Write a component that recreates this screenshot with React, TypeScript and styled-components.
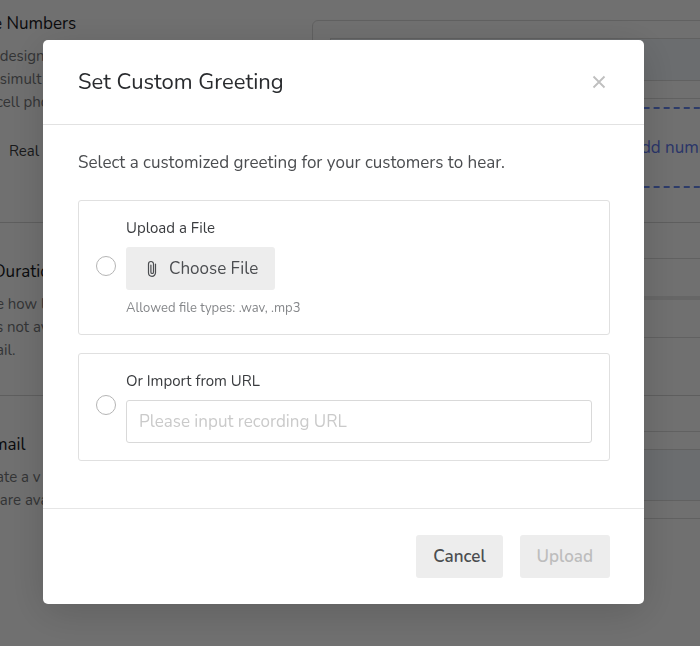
import React, { useState } from "react";
import styled, { createGlobalStyle } from "styled-components";

const GlobalStyle = createGlobalStyle`
  *, *::before, *::after { box-sizing: border-box; }
  body {
    margin: 0;
    background: #fff;
    color: #3a3c3f;
    font-family: Nunito, "Open Sans", "Noto Sans", sans-serif;
    overflow: hidden;
  }
  button, input { font-family: inherit; }
  h1, h2, p { margin: 0; font-weight: 400; }
`;

const Page = styled.main`
  min-height: 100vh;
  overflow: hidden;
`;

const Section = styled.section<{ $last?: boolean }>`
  display: grid;
  grid-template-columns: 312px 1fr;
  min-height: 173px;
  padding-top: 36px;
  border-bottom: ${(p) => (p.$last ? "none" : "1px solid #d6d6d6")};
  &:first-child {
    min-height: 223px;
    padding-top: 11px;
  }
`;

const Info = styled.div`
  margin-left: -7px;
  white-space: nowrap;
`;

const SectionTitle = styled.h2`
  font-size: 17px;
  line-height: 26px;
  color: #17191d;
  margin-bottom: 8px;
`;

const Description = styled.p`
  padding-left: 3px;
  font-size: 15px;
  line-height: 23px;
  color: #75777a;
`;

const SubLabel = styled.p`
  padding: 25px 0 0 16px;
  font-size: 15px;
  line-height: 24px;
`;

const Settings = styled.div`
  display: flex;
  flex-direction: column;
  gap: 8px;
  margin: -36px -40px 0 0;
  padding-top: 35px;
  ${Section}:first-child & {
    margin-top: 0;
    padding-top: 9px;
  }
`;

const Panel = styled.div`
  padding: 17px;
  border: 1px solid #dcdcdc;
  border-radius: 6px;
`;

const Strip = styled.div<{ $tall?: boolean }>`
  height: ${(p) => (p.$tall ? 52 : 43)}px;
  border: 1px solid #dcdcdc;
  background: #f3f7fc;
`;

const Track = styled.div`
  height: 80px;
  border: 1px solid #dcdcdc;
  &::before {
    content: "";
    display: block;
    height: 4px;
    margin-top: 37px;
    background: #e9e9e9;
  }
`;

const AddNumber = styled.button`
  height: 81px;
  border: 2px dashed #6688f0;
  background: none;
  color: #6078ee;
  font-size: 17px;
  padding: 0 0 0 300px;
  text-align: left;
`;

const Overlay = styled.div`
  position: fixed;
  inset: 0;
  display: flex;
  align-items: flex-start;
  padding: 40px 56px 42px 43px;
  background: rgba(0, 0, 0, 0.56);
`;

const Dialog = styled.form`
  flex: 1;
  min-width: 0;
  background: #fff;
  border-radius: 5px;
  box-shadow: 0 8px 40px rgba(0, 0, 0, 0.16);
`;

const Header = styled.header`
  display: flex;
  align-items: center;
  justify-content: space-between;
  padding: 26px 34px 26px 35px;
  border-bottom: 1px solid #e2e2e2;
`;

const Title = styled.h1`
  font-size: 22px;
  line-height: 32px;
  color: #292b2e;
`;

const CloseButton = styled.button`
  display: flex;
  padding: 4px;
  border: 0;
  background: none;
  color: #bfbfbf;
`;

const Body = styled.div`
  display: flex;
  flex-direction: column;
  gap: 18px;
  padding: 26px 34px 47px 35px;
`;

const Lead = styled.p`
  font-size: 17px;
  line-height: 24px;
  margin-bottom: 7px;
  color: #4b4d50;
`;

const Option = styled.div`
  display: grid;
  grid-template-columns: 20px 1fr;
  align-items: center;
  gap: 10px;
  padding: 17px;
  border: 1px solid #e0e0e0;
  border-radius: 3px;
`;

const Radio = styled.input`
  appearance: none;
  width: 20px;
  height: 20px;
  margin: 0 0 4px;
  border: 1px solid #b5b5b5;
  border-radius: 50%;
  background: #fff;
  &:checked {
    border: 6px solid #3c56c8;
  }
`;

const Fields = styled.div`
  display: flex;
  flex-direction: column;
  align-items: flex-start;
`;

const Label = styled.label`
  font-size: 15px;
  line-height: 21px;
  margin-bottom: 8px;
`;

const Button = styled.button<{ $strong?: boolean }>`
  display: flex;
  align-items: center;
  gap: 8px;
  height: 43px;
  padding: 0 17px;
  border: 0;
  border-radius: 3px;
  background: #ededed;
  color: #4b4d50;
  font-size: 17px;
  font-weight: ${(p) => (p.$strong ? 600 : 400)};
  &:disabled {
    color: #bdbdbd;
  }
`;

const Hint = styled.p`
  margin-top: 9px;
  font-size: 13px;
  line-height: 18px;
  color: #85878a;
`;

const UrlInput = styled.input`
  width: 100%;
  height: 43px;
  padding: 0 12px;
  border: 1px solid #d9d9d9;
  border-radius: 3px;
  font-size: 17px;
  color: #3a3c3f;
  &::placeholder {
    color: #cacaca;
    opacity: 1;
  }
`;

const Footer = styled.footer`
  display: flex;
  justify-content: flex-end;
  gap: 17px;
  padding: 26px 34px;
  border-top: 1px solid #e6e6e6;
`;

const CloseIcon = () => (
  <svg width="14" height="14" viewBox="0 0 14 14" fill="none" stroke="currentColor" strokeWidth="1.8" aria-hidden="true">
    <path d="M1.5 1.5L12.5 12.5M12.5 1.5L1.5 12.5" />
  </svg>
);

const ClipIcon = () => (
  <svg width="18" height="18" viewBox="0 0 18 18" fill="none" stroke="currentColor" strokeWidth="1.2" strokeLinecap="round" aria-hidden="true">
    <path d="M12.5 4V12.8a3.5 3.5 0 0 1-7 0V4a2.5 2.5 0 0 1 5 0V12.2a1.3 1.3 0 0 1-2.6 0V5" />
  </svg>
);

export default function App() {
  const [source, setSource] = useState("");
  const [url, setUrl] = useState("");
  return (
    <>
      <GlobalStyle />
      <Page>
        <Section>
          <Info>
            <SectionTitle>e Numbers</SectionTitle>
            <Description>&nbsp;design<br />&nbsp;simult<br />cell pho</Description>
            <SubLabel>Real</SubLabel>
          </Info>
          <Settings>
            <Panel><Strip /></Panel>
            <AddNumber type="button">+ Add number</AddNumber>
          </Settings>
        </Section>
        <Section>
          <Info>
            <SectionTitle>Duration</SectionTitle>
            <Description>e how lo<br />s not av<br />ail.</Description>
          </Info>
          <Settings><Track /></Settings>
        </Section>
        <Section $last>
          <Info>
            <SectionTitle>mail</SectionTitle>
            <Description>ate a v<br />&nbsp;are ava</Description>
          </Info>
          <Settings><Panel><Strip $tall /></Panel></Settings>
        </Section>
      </Page>
      <Overlay>
        <Dialog role="dialog" aria-labelledby="dialog-title" onSubmit={(e) => e.preventDefault()}>
          <Header>
            <Title id="dialog-title">Set Custom Greeting</Title>
            <CloseButton type="button" aria-label="Close"><CloseIcon /></CloseButton>
          </Header>
          <Body>
            <Lead>Select a customized greeting for your customers to hear.</Lead>
            <Option>
              <Radio type="radio" name="source" id="source-file" checked={source === "file"} onChange={() => setSource("file")} />
              <Fields>
                <Label htmlFor="source-file">Upload a File</Label>
                <Button type="button"><ClipIcon />Choose File</Button>
                <Hint>Allowed file types: .wav, .mp3</Hint>
              </Fields>
            </Option>
            <Option>
              <Radio type="radio" name="source" aria-label="Import from URL" checked={source === "url"} onChange={() => setSource("url")} />
              <Fields>
                <Label htmlFor="recording-url">Or Import from URL</Label>
                <UrlInput id="recording-url" value={url} onChange={(e) => setUrl(e.target.value)} placeholder="Please input recording URL" />
              </Fields>
            </Option>
          </Body>
          <Footer>
            <Button type="button" $strong>Cancel</Button>
            <Button type="submit" $strong disabled>Upload</Button>
          </Footer>
        </Dialog>
      </Overlay>
    </>
  );
}
